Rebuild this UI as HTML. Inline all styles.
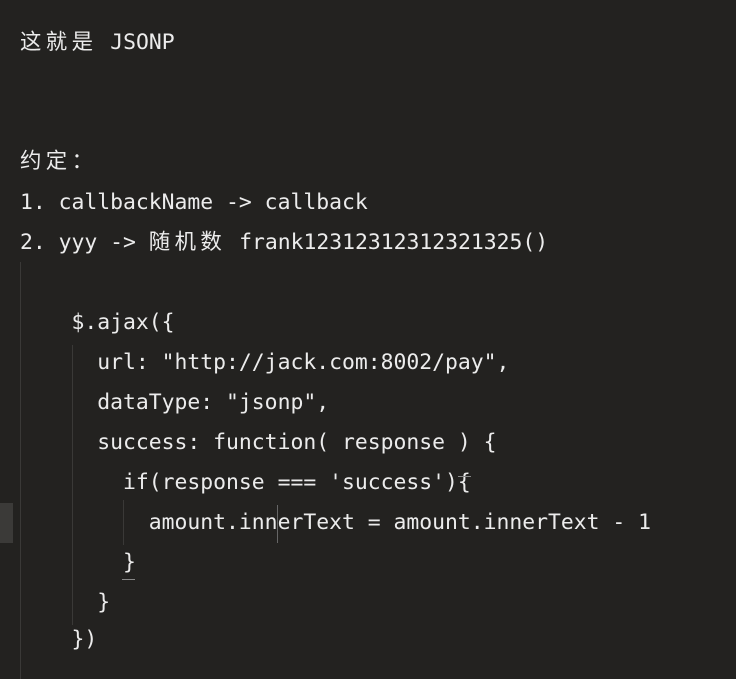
<!DOCTYPE html>
<html><head><meta charset="utf-8"><style>
html,body{margin:0;padding:0;background:#232220;width:736px;height:679px;overflow:hidden}
.l{position:absolute;left:20px;height:40px;line-height:40px;font-family:"DejaVu Sans Mono","Noto Sans CJK SC",monospace;font-size:21.4px;color:#ececec;white-space:pre}
.c{display:inline-block;width:25.8px;text-align:left}
.g{position:absolute;width:1px;background:#3a3937}
</style></head><body>
<div style="position:absolute;left:0;top:503px;width:13px;height:40px;background:#3b3a38"></div>
<div class="g" style="left:20px;top:262px;height:417px"></div>
<div class="g" style="left:72px;top:345px;height:280px"></div>
<div class="g" style="left:123px;top:500px;height:45px"></div>
<div class="g" style="left:277px;top:505px;height:38px;background:#666"></div>
<div class="l" style="top:23px"><span class="c">这</span><span class="c">就</span><span class="c">是</span> JSONP</div>
<div class="l" style="top:142px"><span class="c">约</span><span class="c">定</span><span class="c">：</span></div>
<div class="l" style="top:183px">1. callbackName -&gt; callback</div>
<div class="l" style="top:223px">2. yyy -&gt; <span class="c">随</span><span class="c">机</span><span class="c">数</span> frank12312312312321325()</div>
<div class="l" style="top:303px">    $.ajax({</div>
<div class="l" style="top:343px">      url: "http://jack.com:8002/pay",</div>
<div class="l" style="top:383px">      dataType: "jsonp",</div>
<div class="l" style="top:423px">      success: function( response ) {</div>
<div class="l" style="top:463px">        if(response === 'success'){</div>
<div class="l" style="top:503px">          amount.innerText = amount.innerText - 1</div>
<div class="l" style="top:543px">        }</div>
<div class="l" style="top:583px">      }</div>
<div class="l" style="top:620px">    })</div>
<div class="g" style="left:122px;top:579px;width:13px;height:1px;background:#888"></div>
<div class="g" style="left:458px;top:476px;width:13px;height:1px;background:#888"></div>
</body></html>
